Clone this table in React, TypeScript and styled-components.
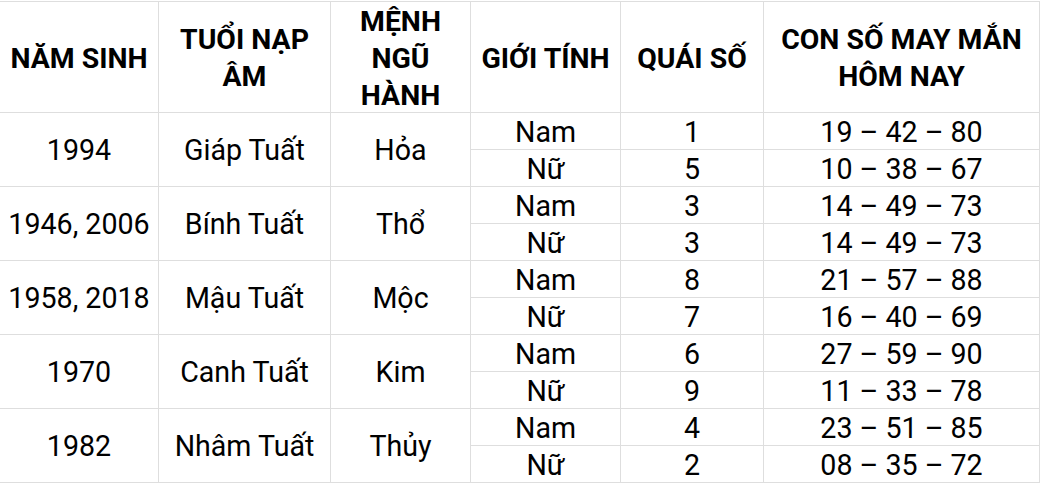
import React from 'react';
import styled, { createGlobalStyle } from 'styled-components';

const GlobalStyle = createGlobalStyle`
  html, body {
    margin: 0;
    padding: 0;
    background: #ffffff;
  }
  body {
    font-family: Roboto, 'Liberation Sans', sans-serif;
    color: #000000;
  }
`;

const Table = styled.div`
  display: grid;
  grid-template-columns: 158px 171px 139px 149px 142px 275px;
  grid-template-rows: 110px repeat(10, 36px);
  gap: 1px;
  width: 1040px;
  margin-top: 1px;
  padding: 1px 1px 1px 0;
  box-sizing: border-box;
  background: #dedede;
`;

const Cell = styled.div<{ $span?: number; $head?: boolean }>`
  display: flex;
  align-items: center;
  justify-content: center;
  text-align: center;
  padding-top: 2px;
  background: #ffffff;
  font-size: ${(p) => (p.$head ? '28.4px' : '28.6px')};
  line-height: 37px;
  font-weight: ${(p) => (p.$head ? 700 : 400)};
  grid-row: ${(p) => (p.$span ? `span ${p.$span}` : 'auto')};
`;

interface Row {
  year: string;
  tuoi: string;
  menh: string;
  nam: [string, string];
  nu: [string, string];
}

const headers = [
  'NĂM SINH',
  'TUỔI NẠP ÂM',
  'MỆNH NGŨ HÀNH',
  'GIỚI TÍNH',
  'QUÁI SỐ',
  'CON SỐ MAY MẮN HÔM NAY',
];

const rows: Row[] = [
  { year: '1994', tuoi: 'Giáp Tuất', menh: 'Hỏa', nam: ['1', '19 – 42 – 80'], nu: ['5', '10 – 38 – 67'] },
  { year: '1946, 2006', tuoi: 'Bính Tuất', menh: 'Thổ', nam: ['3', '14 – 49 – 73'], nu: ['3', '14 – 49 – 73'] },
  { year: '1958, 2018', tuoi: 'Mậu Tuất', menh: 'Mộc', nam: ['8', '21 – 57 – 88'], nu: ['7', '16 – 40 – 69'] },
  { year: '1970', tuoi: 'Canh Tuất', menh: 'Kim', nam: ['6', '27 – 59 – 90'], nu: ['9', '11 – 33 – 78'] },
  { year: '1982', tuoi: 'Nhâm Tuất', menh: 'Thủy', nam: ['4', '23 – 51 – 85'], nu: ['2', '08 – 35 – 72'] },
];

export default function App() {
  return (
    <>
      <GlobalStyle />
      <Table>
        {headers.map((h) => (
          <Cell key={h} $head>
            {h}
          </Cell>
        ))}
        {rows.map((r) => (
          <React.Fragment key={r.year}>
            <Cell $span={2}>{r.year}</Cell>
            <Cell $span={2}>{r.tuoi}</Cell>
            <Cell $span={2}>{r.menh}</Cell>
            <Cell>Nam</Cell>
            <Cell>{r.nam[0]}</Cell>
            <Cell>{r.nam[1]}</Cell>
            <Cell>Nữ</Cell>
            <Cell>{r.nu[0]}</Cell>
            <Cell>{r.nu[1]}</Cell>
          </React.Fragment>
        ))}
      </Table>
    </>
  );
}
